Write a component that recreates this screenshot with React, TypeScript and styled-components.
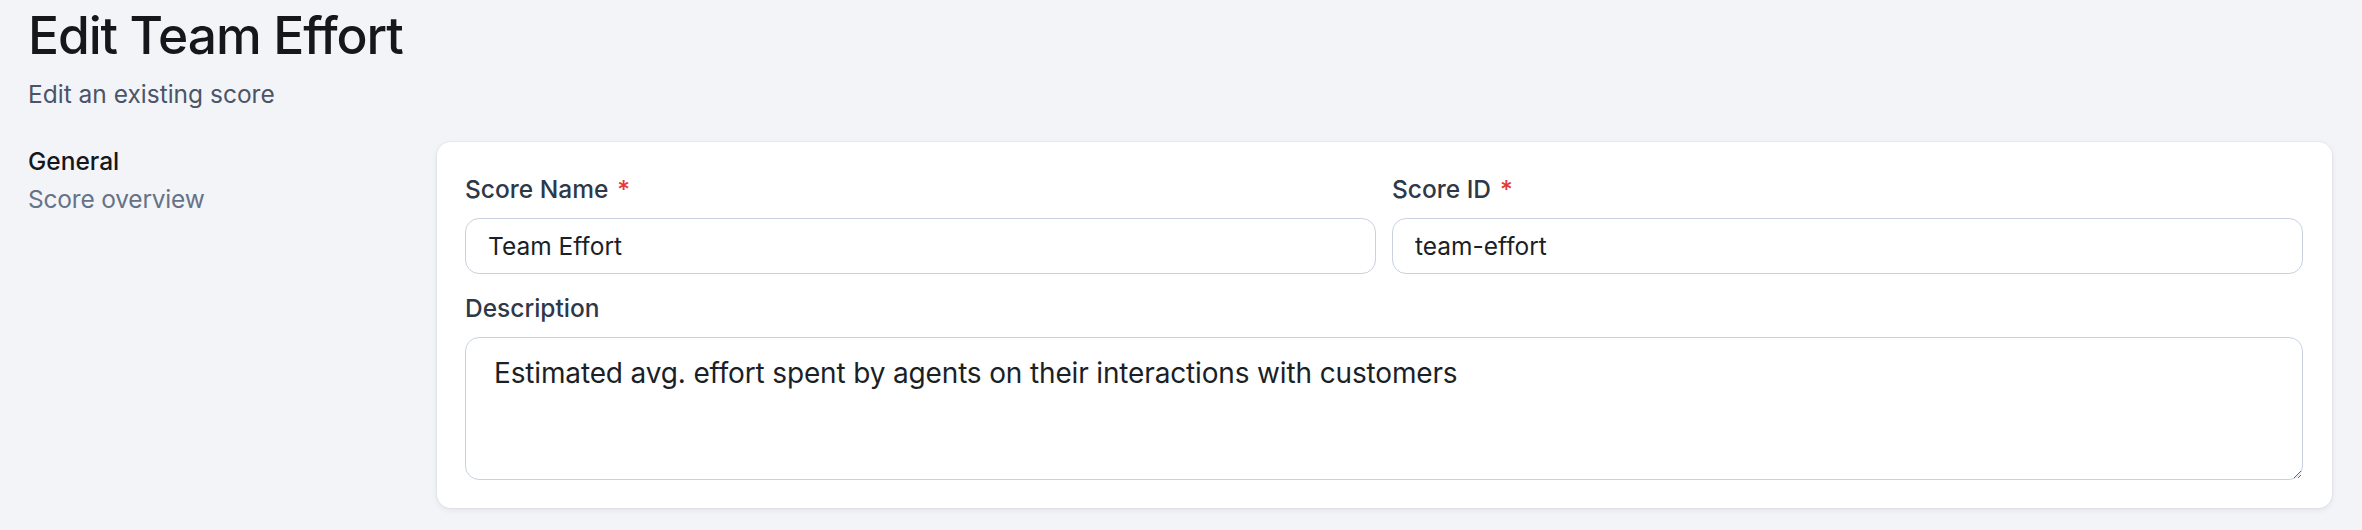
import React from "react";
import styled, { createGlobalStyle } from "styled-components";

const GlobalStyle = createGlobalStyle`
  html, body {
    margin: 0;
    padding: 0;
    background-color: #f3f4f8;
  }
  body {
    font-family: "Inter", "Noto Sans", sans-serif;
    -webkit-font-smoothing: antialiased;
  }
  * {
    box-sizing: border-box;
  }
`;

export const Page = styled.div`
  min-height: 530px;
  padding: 4px 30px 0 28px;
  background-color: #f3f4f8;
`;

export const Title = styled.h1`
  margin: 0;
  font-size: 51.5px;
  line-height: 63px;
  font-weight: 500;
  color: #15171c;
  letter-spacing: -1.1px;
`;

export const Subtitle = styled.p`
  margin: 10px 0 0;
  font-size: 24.5px;
  line-height: 35px;
  color: #4b5567;
`;

export const Layout = styled.div`
  display: grid;
  grid-template-columns: 381px 1fr;
  column-gap: 28px;
  margin-top: 30px;
  align-items: start;
`;

export const SectionInfo = styled.div`
  display: flex;
  flex-direction: column;
`;

export const SectionTitle = styled.h2`
  margin: 0;
  font-size: 24.5px;
  line-height: 38px;
  font-weight: 500;
  color: #15171c;
`;

export const SectionText = styled.p`
  margin: 0;
  font-size: 24.5px;
  line-height: 38px;
  letter-spacing: -0.2px;
  color: #667287;
`;

export const Card = styled.div`
  background: #ffffff;
  border-radius: 14px;
  padding: 30px 29px 28px 28px;
  box-shadow: 0 0 0 1px rgba(15, 23, 42, 0.035), 0 2px 6px rgba(15, 23, 42, 0.08);
  display: flex;
  flex-direction: column;
  gap: 17px;
`;

export const Row = styled.div`
  display: grid;
  grid-template-columns: 1fr 1fr;
  column-gap: 16px;
`;

export const Field = styled.div`
  display: flex;
  flex-direction: column;
  gap: 11px;
`;

export const Label = styled.label`
  font-size: 24.5px;
  line-height: 35px;
  font-weight: 500;
  color: #2e3848;
`;

export const Required = styled.span`
  color: #e5383b;
  margin-left: 9px;
`;

export const Input = styled.input`
  height: 56px;
  width: 100%;
  padding: 0 22px;
  border: 1px solid #c9d2de;
  border-radius: 14px;
  background: #ffffff;
  font-family: inherit;
  font-size: 24.5px;
  color: #1b1f27;
  outline: none;
`;

export const TextArea = styled.textarea`
  display: block;
  width: 100%;
  height: 143px;
  padding: 14px 28px;
  border: 1px solid #c9d2de;
  border-radius: 14px;
  background: #ffffff;
  font-family: inherit;
  font-size: 28px;
  line-height: 42px;
  letter-spacing: -0.15px;
  color: #1b1f27;
  outline: none;
`;

const App: React.FC = () => {
  return (
    <>
      <GlobalStyle />
      <Page>
        <Title>Edit Team Effort</Title>
        <Subtitle>Edit an existing score</Subtitle>
        <Layout>
          <SectionInfo>
            <SectionTitle>General</SectionTitle>
            <SectionText>Score overview</SectionText>
          </SectionInfo>
          <Card>
            <Row>
              <Field>
                <Label htmlFor="score-name">
                  Score Name<Required>*</Required>
                </Label>
                <Input id="score-name" defaultValue="Team Effort" />
              </Field>
              <Field>
                <Label htmlFor="score-id">
                  Score ID<Required>*</Required>
                </Label>
                <Input id="score-id" defaultValue="team-effort" />
              </Field>
            </Row>
            <Field>
              <Label htmlFor="score-description">Description</Label>
              <TextArea
                id="score-description"
                defaultValue="Estimated avg. effort spent by agents on their interactions with customers"
              />
            </Field>
          </Card>
        </Layout>
      </Page>
    </>
  );
};

export default App;
